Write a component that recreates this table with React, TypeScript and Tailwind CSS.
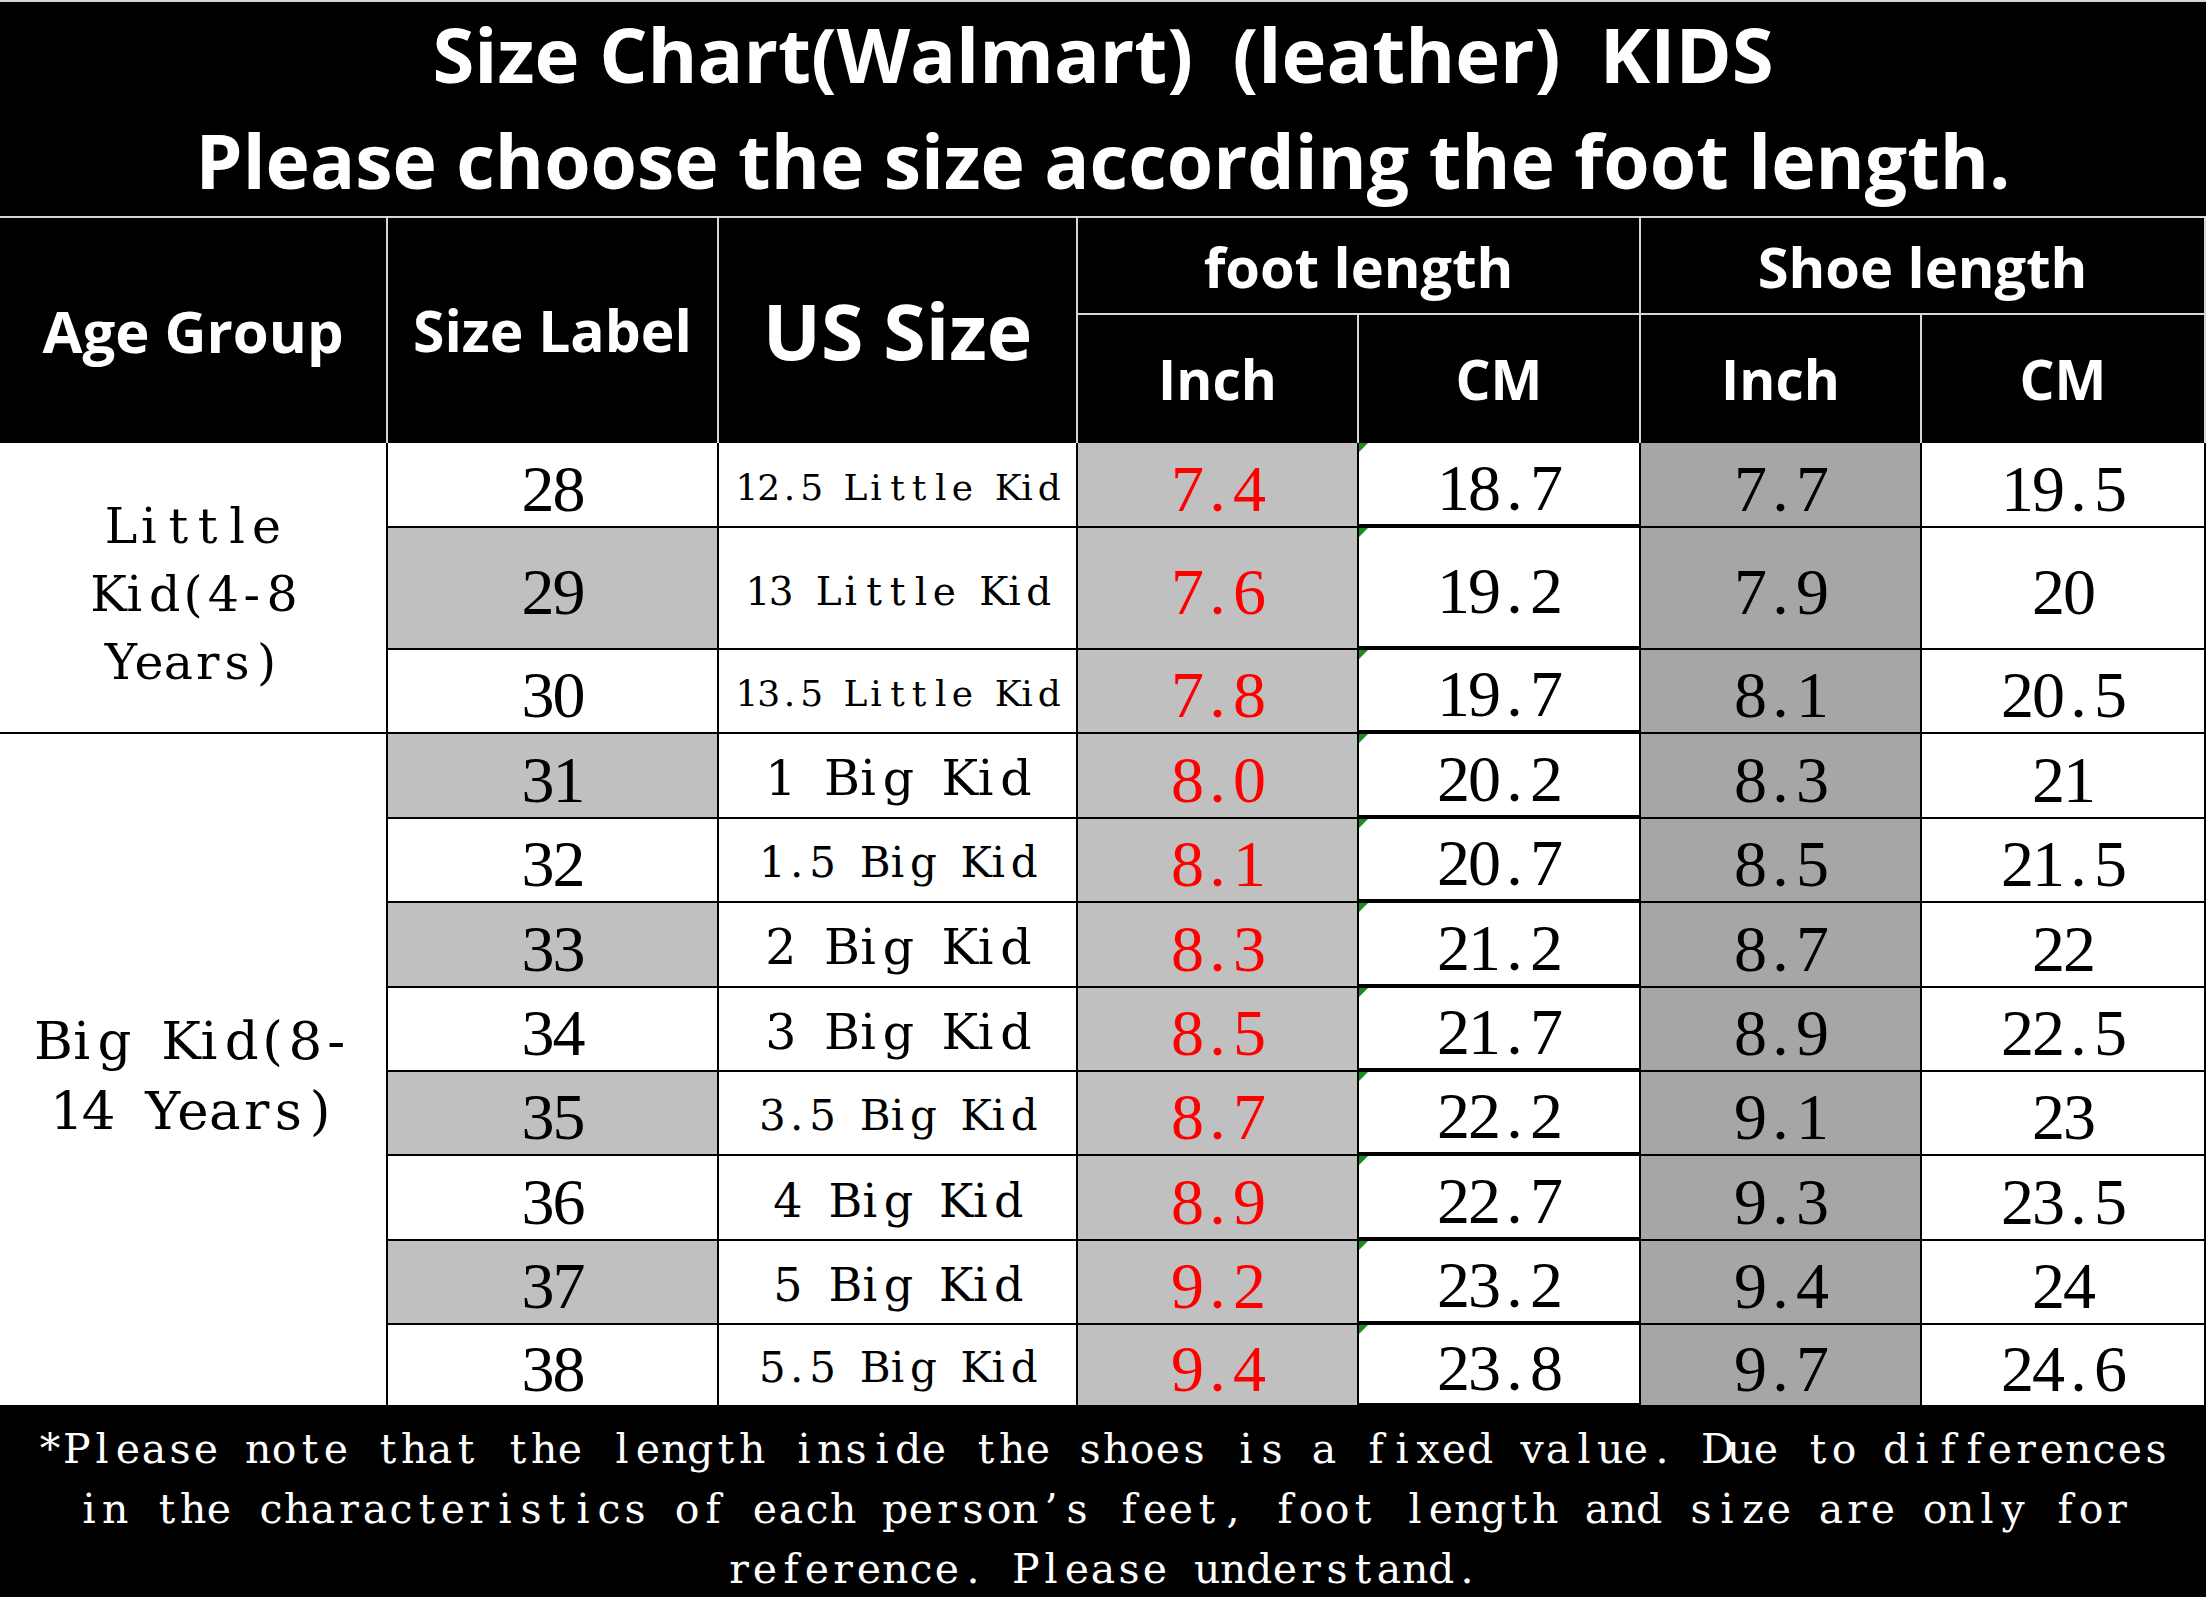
import clsx from "clsx";

type Row = {
  size: string;
  us: string;
  usFont: string;
  footIn: string;
  footCm: string;
  shoeIn: string;
  shoeCm: string;
};

const ROWS: Row[] = [
  { size: "28", us: "12.5 Little Kid", usFont: "text-[36px]", footIn: "7.4", footCm: "18.7", shoeIn: "7.7", shoeCm: "19.5" },
  { size: "29", us: "13 Little Kid", usFont: "text-[39px]", footIn: "7.6", footCm: "19.2", shoeIn: "7.9", shoeCm: "20" },
  { size: "30", us: "13.5 Little Kid", usFont: "text-[36px]", footIn: "7.8", footCm: "19.7", shoeIn: "8.1", shoeCm: "20.5" },
  { size: "31", us: "1 Big Kid", usFont: "text-[49px]", footIn: "8.0", footCm: "20.2", shoeIn: "8.3", shoeCm: "21" },
  { size: "32", us: "1.5 Big Kid", usFont: "text-[42px]", footIn: "8.1", footCm: "20.7", shoeIn: "8.5", shoeCm: "21.5" },
  { size: "33", us: "2 Big Kid", usFont: "text-[49px]", footIn: "8.3", footCm: "21.2", shoeIn: "8.7", shoeCm: "22" },
  { size: "34", us: "3 Big Kid", usFont: "text-[49px]", footIn: "8.5", footCm: "21.7", shoeIn: "8.9", shoeCm: "22.5" },
  { size: "35", us: "3.5 Big Kid", usFont: "text-[42px]", footIn: "8.7", footCm: "22.2", shoeIn: "9.1", shoeCm: "23" },
  { size: "36", us: "4 Big Kid", usFont: "text-[46px]", footIn: "8.9", footCm: "22.7", shoeIn: "9.3", shoeCm: "23.5" },
  { size: "37", us: "5 Big Kid", usFont: "text-[46px]", footIn: "9.2", footCm: "23.2", shoeIn: "9.4", shoeCm: "24" },
  { size: "38", us: "5.5 Big Kid", usFont: "text-[42px]", footIn: "9.4", footCm: "23.8", shoeIn: "9.7", shoeCm: "24.6" },
];

const FOOTER = [
  "*Please note that the length inside the shoes is a fixed value. Due to differences",
  "in the characteristics of each person’s feet, foot length and size are only for",
  "reference. Please understand.",
];

// every glyph gets the same box, like the half-width latin of the original sheet font
function Mono({ text, cell = "w-[0.6em]" }: { text: string; cell?: string }) {
  return (
    <span className="inline-flex">
      {Array.from(text).map((ch, i) => (
        <span key={i} className={clsx("inline-block text-center", cell)}>
          {ch === " " ? "\u00a0" : ch}
        </span>
      ))}
    </span>
  );
}

const head = "flex items-center justify-center bg-black text-white font-['Open_Sans',sans-serif] font-bold border-r-2 border-[#d6d6d6]";
const cell = "relative flex items-center justify-center border-b-2 border-r-2 border-black";
const num = "pt-[8px] font-['Liberation_Serif',serif] text-[66px] leading-none";
const word = "pt-[6px] font-['DejaVu_Serif',serif] leading-none text-black";

export default function App() {
  return (
    <div className="w-[2206px] h-[1600px] overflow-hidden bg-white">
      <div className="flex h-[218px] flex-col items-center justify-center border-t-2 border-b-2 border-[#d6d6d6] bg-black pb-[4px] font-['Open_Sans',sans-serif] font-bold leading-[106px] text-white">
        <div className="whitespace-pre text-[76px]">Size Chart(Walmart)  (leather)  KIDS</div>
        <div className="text-[75px]">Please choose the size according the foot length.</div>
      </div>

      <div className="grid grid-cols-[388px_331px_359px_281px_282px_281px_284px] grid-rows-[97px_128px_85px_122px_84px_85px_84px_85px_84px_84px_85px_84px_82px]">
        <div className={clsx(head, "row-span-2 text-[58px]")}>Age Group</div>
        <div className={clsx(head, "row-span-2 text-[57px]")}>Size Label</div>
        <div className={clsx(head, "row-span-2 text-[77px]")}>US Size</div>
        <div className={clsx(head, "col-span-2 border-b-2 text-[56px]")}>foot length</div>
        <div className={clsx(head, "col-span-2 border-b-2 border-r-0 text-[56px]")}>Shoe length</div>
        <div className={clsx(head, "text-[55px]")}>Inch</div>
        <div className={clsx(head, "text-[55px]")}>CM</div>
        <div className={clsx(head, "text-[55px]")}>Inch</div>
        <div className={clsx(head, "border-r-0 text-[55px]")}>CM</div>

        {ROWS.map((row, i) => (
          <div key={row.size} className="contents">
            {i === 0 ? (
              <div className={clsx(cell, "row-span-3 flex-col pt-[14px] font-['DejaVu_Serif',serif] text-[49px] leading-[68px] text-black")}>
                <Mono text="Little" />
                <Mono text="Kid(4-8" />
                <Mono text="Years)" />
              </div>
            ) : null}
            {i === 3 ? (
              <div className={clsx(cell, "row-span-8 flex-col pt-[12px] font-['DejaVu_Serif',serif] text-[53px] leading-[70px] text-black")}>
                <Mono text="Big Kid(8-" />
                <Mono text="14 Years)" />
              </div>
            ) : null}
            <div className={clsx(cell, num, "text-black", i % 2 === 1 ? "bg-[#c0c0c0]" : "bg-white")}>
              <Mono text={row.size} cell="w-[31px]" />
            </div>
            <div className={clsx(cell, word, row.usFont)}>
              <Mono text={row.us} />
            </div>
            <div className={clsx(cell, num, "bg-[#c0c0c0] text-[#ff0000]")}>
              <Mono text={row.footIn} cell="w-[31px]" />
            </div>
            <div className={clsx(cell, num, "border-b-4 text-black")}>
              <span className="absolute left-0 top-0 h-0 w-0 border-t-[9px] border-r-[9px] border-t-[#1f8a1f] border-r-transparent" />
              <Mono text={row.footCm} cell="w-[31px]" />
            </div>
            <div className={clsx(cell, num, "bg-[#a6a6a6] text-black")}>
              <Mono text={row.shoeIn} cell="w-[31px]" />
            </div>
            <div className={clsx(cell, num, "border-r-0 text-black")}>
              <Mono text={row.shoeCm} cell="w-[31px]" />
            </div>
          </div>
        ))}
      </div>

      <div className="flex h-[190px] flex-col items-center justify-center bg-black pt-[14px] font-['DejaVu_Serif',serif] text-[41px] leading-[60px] text-white">
        {FOOTER.map((line) => (
          <Mono key={line} text={line} cell="w-[26px]" />
        ))}
      </div>
    </div>
  );
}
